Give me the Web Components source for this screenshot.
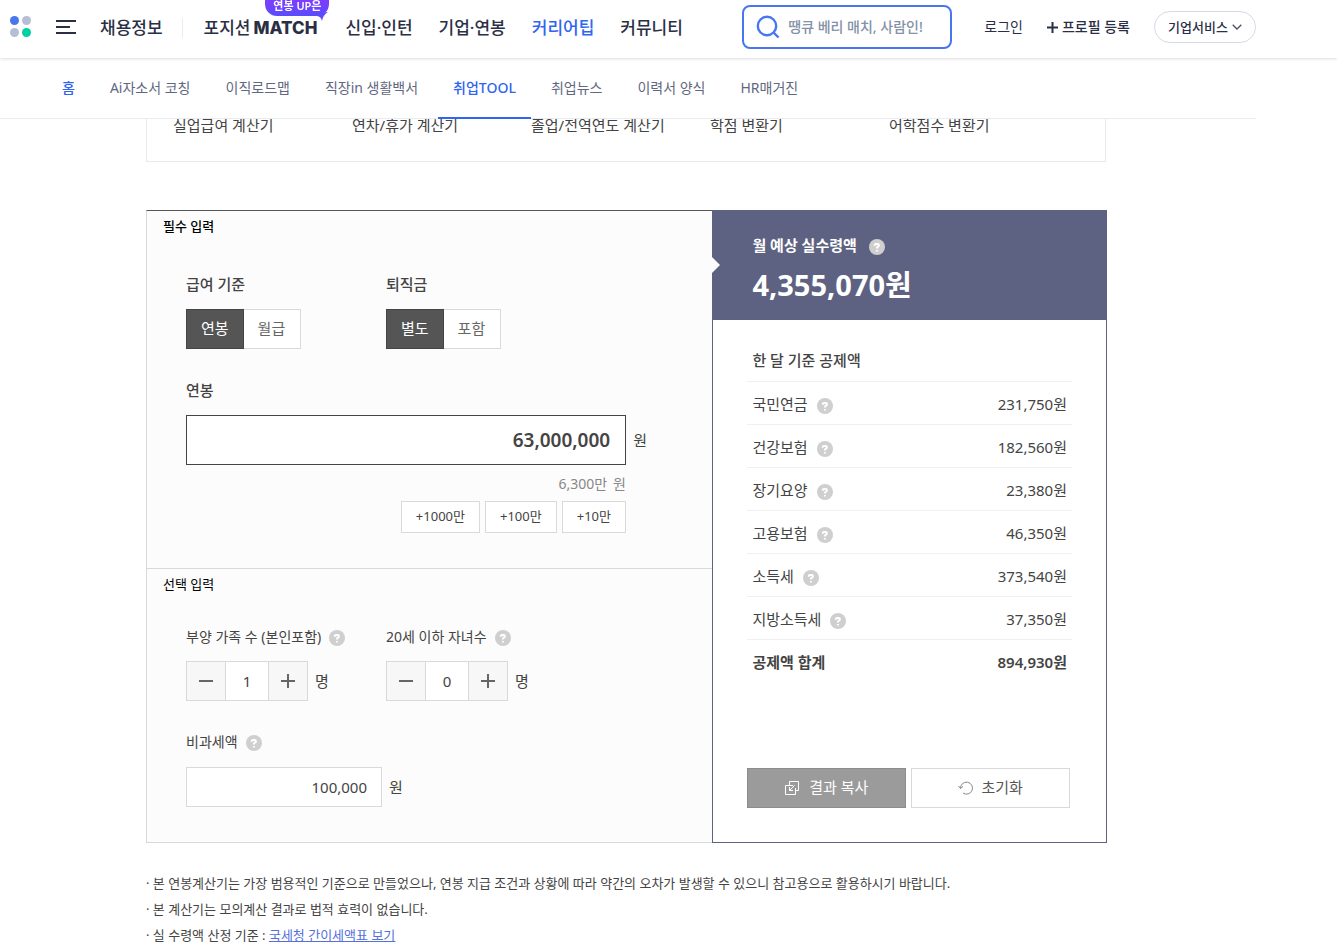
<!DOCTYPE html>
<html lang="ko">
<head>
<meta charset="utf-8">
<meta name="viewport" content="width=device-width, initial-scale=1">
<title>연봉계산기</title>
<style>
  body {
    margin: 0;
    padding-top: 119px;
    background: #fff;
    color: #444;
    font-family: "Noto Sans", "Noto Sans CJK KR", sans-serif;
    font-size: 15px;
    line-height: 20px;
  }
  main {
    max-width: 961px;
    margin-left: 146px;
  }
</style>
</head>
<body>
<site-header>
  <top-nav></top-nav>
  <sub-nav></sub-nav>
</site-header>
<main>
  <tool-links></tool-links>
  <salary-calculator>
    <form-section slot="form" heading="필수 입력" required>
      <field-row>
        <radio-toggle label="급여 기준" name="base" options="연봉,월급"></radio-toggle>
        <radio-toggle label="퇴직금" name="severance" options="별도,포함"></radio-toggle>
      </field-row>
      <salary-input label="연봉" value="63,000,000"></salary-input>
    </form-section>
    <form-section slot="form" heading="선택 입력">
      <field-row>
        <num-stepper label="부양 가족 수 (본인포함)" value="1"></num-stepper>
        <num-stepper label="20세 이하 자녀수" value="0"></num-stepper>
      </field-row>
      <won-input label="비과세액" value="100,000"></won-input>
    </form-section>
    <calc-result slot="result"></calc-result>
  </salary-calculator>
  <calc-notes></calc-notes>
</main>

<script>
const base = `
    *, *::before, *::after {
      box-sizing: border-box;
    }
    :host {
      display: block;
    }
    a {
      color: inherit;
      text-decoration: none;
    }
    ul {
      margin: 0;
      padding: 0;
      list-style: none;
    }
    button, input {
      margin: 0;
      padding: 0;
      font: inherit;
      color: inherit;
      border-radius: 0;
      outline: none;
    }
    button {
      cursor: pointer;
    }
`

function define(name, html, setup) {
    const template = document.createElement('template')
    template.innerHTML = html
    customElements.define(name, class extends HTMLElement {
        constructor() {
            super()
            this.attachShadow({mode: 'open'})
            this.shadowRoot.appendChild(template.content.cloneNode(true))
        }
        connectedCallback() {
            if (setup && !this.ready) {
                this.ready = true
                setup.call(this, this.shadowRoot)
            }
        }
    })
}

// 헤더
define('site-header', `<style>${base}
    :host {
      position: fixed;
      top: 0;
      left: 0;
      right: 0;
      z-index: 10;
      background: #fff;
    }
  </style>
  <slot></slot>`)

define('top-nav', `<style>${base}
    :host {
      height: 58px;
      box-shadow: 0 1px 3px 0 rgba(0,0,0, 0.14);
      color: #2b2f45;
    }
    header {
      display: flex;
      align-items: center;
      max-width: 1256px;
      height: 54px;
      padding-left: 10px;
    }
    svg {
      display: block;
    }
    .menu {
      margin: 0 24px;
      border: 0;
      background: none;
    }
    nav {
      display: flex;
      align-items: center;
      gap: 26px;
      padding-top: 2px;
      font-size: 17px;
      font-weight: 500;
      line-height: 24px;
      white-space: nowrap;
    }
    .first {
      padding-right: 19px;
      border-right: 1px solid #e9ebf2;
      line-height: 20px;
      margin-right: -5px;
    }
    .match {
      display: flex;
      gap: 3px;
      position: relative;
      margin-right: 2px;
    }
    .match b {
      font: 800 17px/24px Inter, sans-serif;
    }
    .on {
      color: #2f65f0;
    }
    .badge {
      position: absolute;
      top: -16px;
      right: -12px;
      width: 64px;
      height: 16px;
      border-radius: 0 0 12px 12px;
      background: linear-gradient(#7f3dff, #5a4bff);
      color: #fff;
      font-size: 11px;
      font-weight: 600;
      line-height: 12px;
      text-align: center;
    }
    .badge svg {
      position: absolute;
      right: 1px;
      bottom: -5px;
    }
    form {
      display: flex;
      align-items: center;
      gap: 8px;
      width: 210px;
      height: 44px;
      margin-left: auto;
      padding: 0 12px;
      border: 2px solid #4876ef;
      border-radius: 8px;
    }
    form svg {
      flex: none;
    }
    input {
      width: 100%;
      min-width: 0;
      border: 0;
      background: none;
      font-size: 14px;
      font-weight: 500;
    }
    input::placeholder {
      color: #8491a7;
    }
    .util {
      display: flex;
      align-items: center;
      gap: 24px;
      margin-left: 32px;
      font-size: 14px;
      white-space: nowrap;
    }
    .util a {
      display: flex;
      align-items: center;
      gap: 4px;
    }
    .util .profile {
      font-weight: 500;
    }
    .corp {
      display: flex;
      align-items: center;
      justify-content: center;
      gap: 4px;
      width: 102px;
      height: 32px;
      border: 1px solid #d7dae6;
      border-radius: 16px;
      background: #fff;
      font-size: 13px;
      font-weight: 500;
    }
  </style>
  <header>
    <a href="#" aria-label="홈">
      <svg width="22" height="22" viewBox="0 0 22 22"><circle cx="4.5" cy="4.5" r="4.5" fill="#4876ef"/><circle cx="16.5" cy="4.5" r="4.5" fill="#b4bfd3"/><circle cx="4.5" cy="16.5" r="4.5" fill="#b4bfd3"/><circle cx="16.5" cy="16.5" r="4.5" fill="#00d1a4"/></svg>
    </a>
    <button class="menu" type="button" aria-label="전체메뉴">
      <svg width="20" height="14" viewBox="0 0 20 14" stroke="#2b2f45" stroke-width="2"><path d="M0 1h20M0 7h14M0 13h20"/></svg>
    </button>
    <nav>
      <a class="first" href="#">채용정보</a>
      <a class="match" href="#">포지션<b>MATCH</b>
        <span class="badge">연봉 UP은<svg width="12" height="9" viewBox="0 0 12 9"><path d="M0 2 12 0Q7 3 6 9 5 4 0 4z" fill="#5a4bff"/></svg></span>
      </a>
      <a href="#">신입·인턴</a>
      <a href="#">기업·연봉</a>
      <a class="on" href="#">커리어팁</a>
      <a href="#">커뮤니티</a>
    </nav>
    <form role="search">
      <svg width="24" height="24" viewBox="0 0 24 24" fill="none" stroke="#4876ef" stroke-width="2.4"><circle cx="11" cy="11" r="9.2"/><path d="m17.5 17.5 5 5"/></svg>
      <input type="text" aria-label="검색어" placeholder="땡큐 베리 매치, 사람인!">
    </form>
    <div class="util">
      <a href="#">로그인</a>
      <a class="profile" href="#"><svg width="11" height="11" viewBox="0 0 11 11" stroke="#2b2f45" stroke-width="2"><path d="M5.5 0v11M0 5.5h11"/></svg>프로필 등록</a>
      <button class="corp" type="button">기업서비스<svg width="10" height="6" viewBox="0 0 10 6" fill="none" stroke="#4b5068" stroke-width="1.3"><path d="m.7.7 4.3 4.3L9.3.7"/></svg></button>
    </div>
  </header>`)

define('sub-nav', `<style>${base}
    :host {
      padding-top: 1px;
      color: #5f6880;
      font-size: 14px;
    }
    nav {
      display: flex;
      gap: 5px;
      max-width: 1256px;
      height: 60px;
      padding-left: 47px;
      border-bottom: 1px solid #e9ebf2;
      white-space: nowrap;
    }
    a {
      height: 60px;
      padding: 0 15px;
      line-height: 58px;
    }
    .home {
      color: #2f65f0;
      font-weight: 500;
    }
    .on {
      border-bottom: 2px solid #2f65f0;
      color: #2f65f0;
      font-weight: 500;
    }
  </style>
  <nav>
    <a class="home" href="#">홈</a>
    <a href="#">Ai자소서 코칭</a>
    <a href="#">이직로드맵</a>
    <a href="#">직장in 생활백서</a>
    <a class="on" href="#">취업TOOL</a>
    <a href="#">취업뉴스</a>
    <a href="#">이력서 양식</a>
    <a href="#">HR매거진</a>
  </nav>`)

define('tool-links', `<style>${base}
    ul {
      display: grid;
      grid-template-columns: repeat(5, 1fr);
      max-width: 960px;
      margin-top: -12px;
      padding: 8px 37px 26px 26px;
      border: 1px solid #e9e9e9;
      border-top: 0;
      white-space: nowrap;
    }
  </style>
  <ul>
    <li><a href="#">실업급여 계산기</a></li>
    <li><a href="#">연차/휴가 계산기</a></li>
    <li><a href="#">졸업/전역연도 계산기</a></li>
    <li><a href="#">학점 변환기</a></li>
    <li><a href="#">어학점수 변환기</a></li>
  </ul>`)

// 계산기
define('help-tip', `<style>${base}
    :host {
      display: inline-block;
      height: 16px;
    }
    button {
      display: block;
      width: 16px;
      height: 16px;
      border: 0;
      border-radius: 50%;
      background: #cfcfcf;
    }
    svg {
      display: block;
    }
  </style>
  <button type="button" aria-label="도움말">
    <svg width="16" height="16" viewBox="0 0 16 16" fill="none" stroke="#fff" stroke-width="2"><path d="M5.8 6.8V6Q5.8 4.9 7 4.9h1.6Q9.9 4.9 9.9 6.2 9.9 7.2 8.900 7.700 7.900 8.200 7.900 9.600M7.900 10.900v1.700"/></svg>
  </button>`)

define('salary-calculator', `<style>${base}
    :host {
      display: flex;
      margin-top: 48px;
    }
    .form {
      flex: 566;
      border: 1px solid #d9d9d9;
      border-top-color: #555;
      border-right: 0;
      background: #fcfcfc;
    }
    .result {
      display: flex;
      flex: 395;
    }
  </style>
  <div class="form"><slot name="form"></slot></div>
  <div class="result"><slot name="result"></slot></div>`)

define('form-section', `<style>${base}
    :host {
      padding: 5px 39px 35px;
    }
    :host(:not([required])) {
      border-top: 1px solid #d9d9d9;
    }
    h2 {
      margin: 0 0 1px -23px;
      color: #000;
      font-size: 13px;
      font-weight: 400;
      line-height: 20px;
    }
    :host([required]) h2 {
      font-weight: 500;
    }
  </style>
  <h2></h2>
  <slot></slot>`, function (root) {
    root.querySelector('h2').textContent = this.getAttribute('heading')
})

define('field-row', `<style>${base}
    :host {
      display: grid;
      grid-template-columns: 200px 200px;
    }
  </style>
  <slot></slot>`)

define('radio-toggle', `<style>${base}
    fieldset {
      min-width: 0;
      margin: 0;
      padding: 37px 0 0;
      border: 0;
    }
    legend {
      float: left;
      padding: 0;
      font-weight: 500;
    }
    .group {
      display: flex;
      clear: both;
      padding-top: 15px;
    }
    input {
      position: absolute;
      opacity: 0;
    }
    label {
      height: 40px;
      padding: 0 14px;
      border: 1px solid #d9d9d9;
      background: #fff;
      color: #666;
      line-height: 36px;
      cursor: pointer;
    }
    label:last-child {
      padding-right: 15px;
      border-left: 0;
    }
    input:checked + label {
      border-color: #444;
      background: #555;
      color: #fff;
    }
  </style>
  <fieldset>
    <legend></legend>
    <div class="group"></div>
  </fieldset>`, function (root) {
    const name = this.getAttribute('name')
    root.querySelector('legend').textContent = this.getAttribute('label')
    root.querySelector('.group').innerHTML = this.getAttribute('options').split(',').map((text, i) =>
        `<input type="radio" name="${name}" id="${name}${i}" ${i ? '' : 'checked'}><label for="${name}${i}">${text}</label>`
    ).join('')
})

define('salary-input', `<style>${base}
    :host {
      width: 440px;
      padding-top: 31px;
    }
    label {
      display: block;
      font-weight: 500;
    }
    .box {
      display: flex;
      align-items: center;
      gap: 7px;
      width: 461px;
      margin-top: 15px;
    }
    input {
      flex: 1;
      min-width: 0;
      height: 50px;
      padding: 0 15px;
      border: 1px solid #444;
      background: #fff;
      font-size: 19px;
      font-weight: 600;
      text-align: right;
    }
    p {
      margin: 9px 0 7px;
      color: #888;
      font-size: 14px;
      text-align: right;
      word-break: keep-all;
    }
    p span {
      margin-left: 6px;
    }
    .add {
      display: flex;
      justify-content: flex-end;
      gap: 5px;
    }
    button {
      height: 32px;
      padding: 0 14px 2px;
      border: 1px solid #d9d9d9;
      background: #fff;
      font-size: 13px;
    }
  </style>
  <label for="salary"></label>
  <div class="box"><input id="salary" type="text">원</div>
  <p>6,300만<span>원</span></p>
  <div class="add">
    <button type="button" data-add="10000000">+1000만</button>
    <button type="button" data-add="1000000">+100만</button>
    <button type="button" data-add="100000">+10만</button>
  </div>`, function (root) {
    const input = root.querySelector('input')
    root.querySelector('label').textContent = this.getAttribute('label')
    input.value = this.getAttribute('value')
    root.querySelector('.add').addEventListener('click', e => {
        if (!e.target.dataset.add) return
        const total = Number(input.value.replace(/,/g, '')) + Number(e.target.dataset.add)
        input.value = total.toLocaleString()
        root.querySelector('p').firstChild.textContent = (total / 10000).toLocaleString() + '만'
    })
})

const labelStyle = `
    .label {
      display: flex;
      align-items: center;
      gap: 8px;
      font-size: 14px;
      white-space: nowrap;
    }
    help-tip {
      margin-top: 2px;
    }
`

define('num-stepper', `<style>${base}${labelStyle}
    :host {
      padding-top: 32px;
    }
    .box {
      display: flex;
      align-items: center;
      gap: 7px;
      margin-top: 14px;
    }
    .group {
      display: flex;
      width: 122px;
      height: 40px;
      border: 1px solid #d9d9d9;
    }
    button {
      display: grid;
      place-items: center;
      width: 38px;
      border: 0;
      background: #f7f7f7;
    }
    input {
      flex: 1;
      min-width: 0;
      border: solid #d9d9d9;
      border-width: 0 1px;
      background: #fff;
      text-align: center;
    }
  </style>
  <div class="label"><label for="count"></label><help-tip></help-tip></div>
  <div class="box">
    <div class="group">
      <button type="button" aria-label="감소" data-step="-1"><svg width="14" height="14" stroke="#666" stroke-width="2"><path d="M0 7h14"/></svg></button>
      <input id="count" type="text">
      <button type="button" aria-label="증가" data-step="1"><svg width="14" height="14" stroke="#666" stroke-width="2"><path d="M0 7h14M7 0v14"/></svg></button>
    </div>
    명
  </div>`, function (root) {
    const input = root.querySelector('input')
    root.querySelector('label').textContent = this.getAttribute('label')
    input.value = this.getAttribute('value')
    root.querySelectorAll('button').forEach(button => {
        button.addEventListener('click', () => {
            input.value = Math.max(0, Number(input.value) + Number(button.dataset.step))
        })
    })
})

define('won-input', `<style>${base}${labelStyle}
    :host {
      padding-top: 31px;
    }
    .box {
      display: flex;
      align-items: center;
      gap: 7px;
      margin-top: 15px;
    }
    input {
      width: 196px;
      height: 40px;
      padding: 0 14px;
      border: 1px solid #d9d9d9;
      background: #fff;
      text-align: right;
    }
  </style>
  <div class="label"><label for="won"></label><help-tip></help-tip></div>
  <div class="box"><input id="won" type="text">원</div>`, function (root) {
    root.querySelector('label').textContent = this.getAttribute('label')
    root.querySelector('input').value = this.getAttribute('value')
})

const rows = [
    ['국민연금', '231,750원'],
    ['건강보험', '182,560원'],
    ['장기요양', '23,380원'],
    ['고용보험', '46,350원'],
    ['소득세', '373,540원'],
    ['지방소득세', '37,350원']
]

define('calc-result', `<style>${base}
    :host {
      display: flex;
      flex-direction: column;
      flex: 1;
      border: 1px solid #5e6282;
      background: #fff;
    }
    .total {
      position: relative;
      height: 109px;
      padding: 24px 39px 0;
      background: #5e6282;
      color: #fff;
    }
    /* 왼쪽 입력 영역 쪽 화살표 */
    .total::before {
      content: "";
      position: absolute;
      left: -1px;
      top: 46px;
      border: solid transparent;
      border-width: 8px 0 8px 8px;
      border-left-color: #fcfcfc;
    }
    h2 {
      display: flex;
      align-items: center;
      gap: 12px;
      margin: 0;
      font-size: 15px;
      font-weight: 700;
      line-height: 20px;
    }
    help-tip {
      margin-top: 4px;
    }
    strong {
      display: block;
      margin-top: 10px;
      font-size: 29px;
      line-height: 40px;
    }
    .body {
      display: flex;
      flex: 1;
      flex-direction: column;
      justify-content: space-between;
      padding: 18px 34px 34px;
    }
    table {
      width: 100%;
      border-collapse: collapse;
    }
    caption {
      height: 43px;
      padding: 12px 5px 0;
      font-weight: 500;
      text-align: left;
    }
    th, td {
      height: 43px;
      padding: 2px 5px 0;
      border-top: 1px solid #f0f0f0;
      font-weight: 400;
      text-align: left;
    }
    th div {
      display: flex;
      align-items: center;
      gap: 9px;
    }
    td {
      text-align: right;
    }
    tfoot th, tfoot td {
      font-weight: 600;
    }
    .buttons {
      display: grid;
      grid-template-columns: 1fr 1fr;
      gap: 5px;
      padding-right: 2px;
    }
    .buttons button {
      display: flex;
      align-items: center;
      justify-content: center;
      height: 40px;
      padding-bottom: 2px;
      border: 1px solid #d9d9d9;
      background: #fff;
      color: #555;
      gap: 8px;
    }
    .buttons svg {
      margin-top: 2px;
    }
    .buttons .copy {
      border-color: #8c8c8c;
      background: #9b9b9b;
      color: #fff;
      gap: 10px;
    }
  </style>
  <div class="total">
    <h2>월 예상 실수령액<help-tip></help-tip></h2>
    <strong>4,355,070원</strong>
  </div>
  <div class="body">
    <table>
      <caption>한 달 기준 공제액</caption>
      <tbody>${rows.map(([name, value]) => `<tr><th scope="row"><div>${name}<help-tip></help-tip></div></th><td>${value}</td></tr>`).join('')}</tbody>
      <tfoot><tr><th scope="row">공제액 합계</th><td>894,930원</td></tr></tfoot>
    </table>
    <div class="buttons">
      <button class="copy" type="button"><svg width="14" height="14" viewBox="0 0 14 14" fill="none" stroke="#fff"><path d="M4.5 4.5V.5h9v9h-3M8 4.5H.5v9h10V7M9.5 4.5l-5 5M4.5 6v3.5H8"/></svg>결과 복사</button>
      <button type="button"><svg width="15" height="14" viewBox="0 0 15 14" fill="none" stroke="#888"><path d="M2.5 7.5A6 6 0 1 1 5 12M.5 5l2 2.500L5 5.500"/></svg>초기화</button>
    </div>
  </div>`)

define('calc-notes', `<style>${base}
    ul {
      margin-top: 27px;
      font-size: 13px;
      line-height: 26px;
    }
    a {
      color: #5470dc;
      text-decoration: underline;
    }
  </style>
  <ul>
    <li>· 본 연봉계산기는 가장 범용적인 기준으로 만들었으나, 연봉 지급 조건과 상황에 따라 약간의 오차가 발생할 수 있으니 참고용으로 활용하시기 바랍니다.</li>
    <li>· 본 계산기는 모의계산 결과로 법적 효력이 없습니다.</li>
    <li>· 실 수령액 산정 기준 : <a href="#">국세청 간이세액표 보기</a></li>
  </ul>`)
</script>
</body>
</html>
